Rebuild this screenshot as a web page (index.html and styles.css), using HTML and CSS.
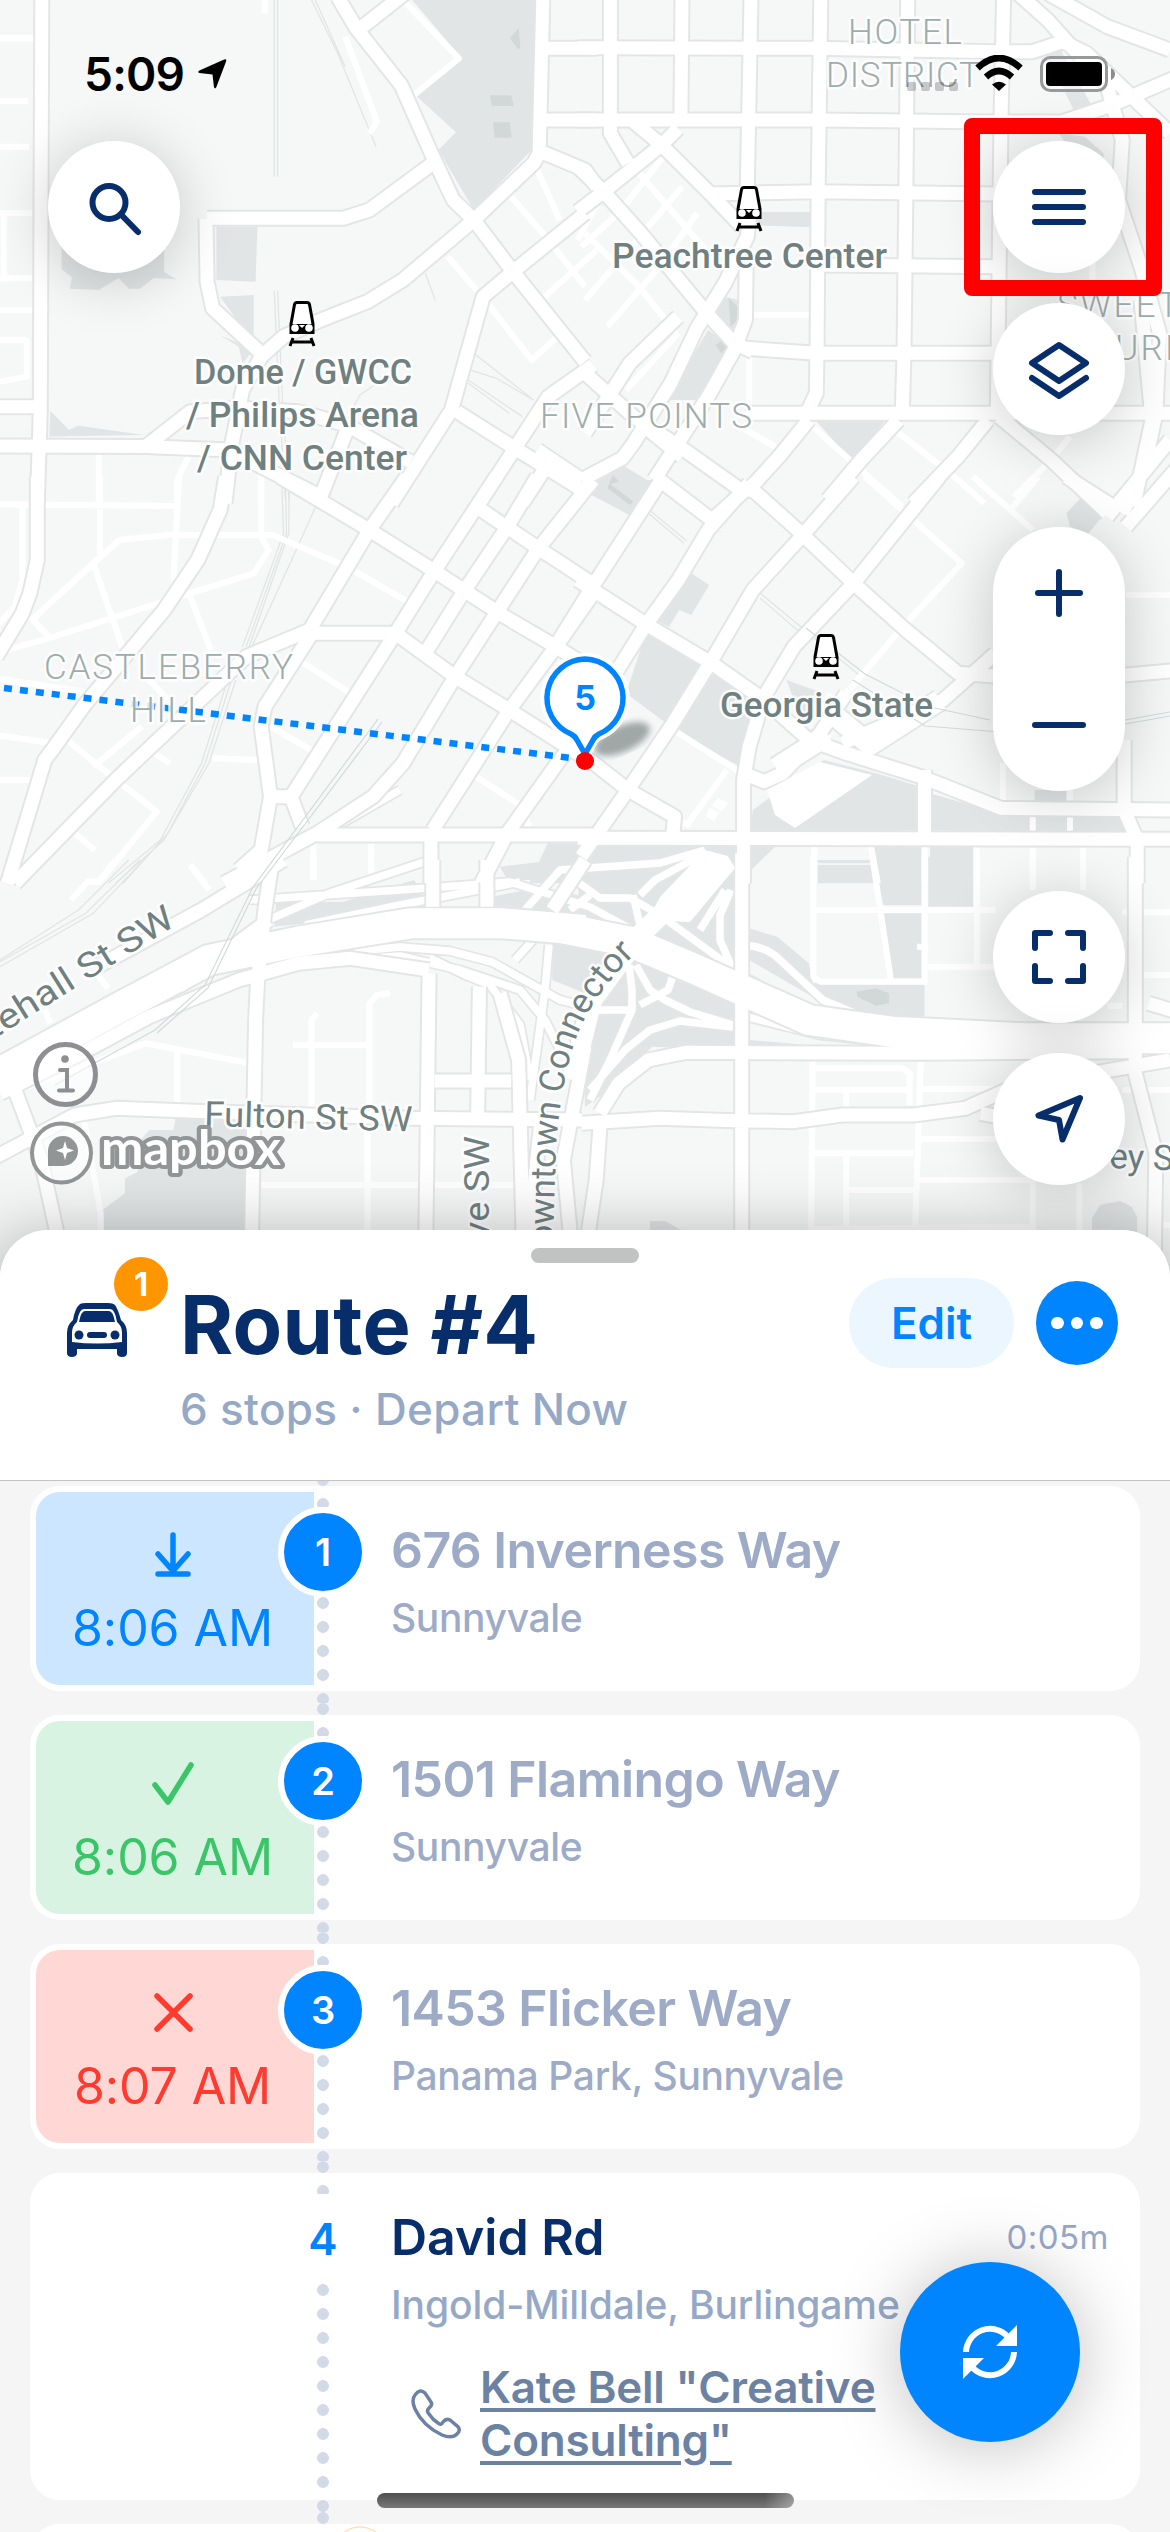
FILE: index.html
```html
<!DOCTYPE html>
<html lang="en">
<head>
<meta charset="utf-8">
<title>Route #4</title>
<link rel="stylesheet" href="styles.css">
</head>
<body>
<main class="screen">
  <section class="map">
    <svg class="map-canvas" viewBox="0 0 1170 1330" width="1170" height="1330">
      <defs>
        <filter id="soft"><feGaussianBlur stdDeviation="3"/></filter>
        <linearGradient id="fade" x1="0" y1="0" x2="0" y2="1"><stop offset="0" stop-color="#000" stop-opacity="0"/><stop offset="1" stop-color="#000" stop-opacity=".1"/></linearGradient>
        <g id="station">
          <path d="M8 1.500h10q2 0 2.500 2L24 23v8.500H2V23L5.500 3.500q.5-2 2.500-2z" fill="#fff" stroke="#000" stroke-width="3"/>
          <path d="M2 23h22v10H2z"/><circle cx="6" cy="27" r="3.800" fill="#fff"/><circle cx="20" cy="27" r="3.800" fill="#fff"/><path d="M10 24h6l-3 3z" fill="#fff"/>
          <path d="M4 37l-3 8M22 37l3 8M3 41h20" fill="none" stroke="#000" stroke-width="3"/>
        </g>
        <g id="freeways">
          <g transform="translate(0 860) scale(.3731 .3333)">
            <path d="M-20 650L300 455L560 300L800 245L1100 190L1350 190L1568 210"/>
          </g>
          <g transform="translate(585 860) scale(.3731 .3333)">
            <path d="M-60 205L120 245L300 330L420 390L600 480L820 515L1180 535L1600 535"/>
          </g>
        </g>
        <g id="connectors">
          <path d="M715 862L640 935L592 1000L572 1080M828 735L776 768M822 705L870 745L940 700"/>
        </g>
        <g id="streets">
          <g transform="scale(.3731 .3333)">
            <path d="M112-10L108 1230L100 1510M905-10L955 85L1075 255L1160 470L1215 600L1270 660L1375 815L1568 1085M1085-20L955 95"/>
            <path d="M1455-10L1445 460L1430 490L1270 660L1080 840L985 905L860 960L760 1010L700 1070L650 1170L620 1340L603 1510"/>
            <path d="M1455 145H1600M1450 360H1600M1450 455L1568 510L1600 560M555 655H920L990 630L1160 490M552 655L555 845L570 925L700 1060"/>
            <path d="M1568 640L1375 815L1295 890L1210 1230L1050 1510M1590 1095L1470 1190L1380 1345L1285 1510M1225 1235L1380 1345L1568 1475"/>
            <path d="M-10 1220H100M-10 1338L390 1340L510 1235L640 1225L800 1235L930 1275L1100 1385M390 1340L620 1350L700 1400L860 1490M930 1290L860 1490M1470 1390L1400 1510"/>
          </g>
          <g transform="translate(585 0) scale(.3731 .3333)">
            <path d="M68-10V400L115 490M260-10L257 360M445-10L435 560L440 670M632-10L625 560L622 1040L620 1180L590 1250M865-10L860 580L855 1060L850 1250M1122-10L1115 360L1105 1240"/>
            <path d="M-20 143L620 145L1100 155L1200 155L1280 125L1345 160L1568 400M-20 360H630L1100 366L1280 365L1400 320L1600 225M335 582L620 575L1110 582M625 795L1110 800M430 1045L620 1060H1105M430 1240H1600"/>
            <path d="M250 385L205 435L50 575L-20 635M-20 500L50 575L150 700L260 850L330 945L400 1030L450 1055M130 365L205 435L335 580L420 680"/>
            <path d="M440 660L435 710L375 850L300 985L230 1150L130 1330L100 1375L-10 1440M432 800L430 960L400 1050L330 1190L185 1440M-10 1110L130 1250L260 1345L430 1480M600 1260L520 1370L430 1480"/>
            <path d="M840 1260L740 1380L650 1500M1080 1260L1000 1370L880 1510M1110 1250L1250 1380L1400 1540M160 1280L260 1370M0 1300L120 1090L250 950M1160-20L1240 60L1400 260L1440 420L1430 600L1490 800L1540 1000L1530 1240L1500 1400L1440 1540M1240-20L1400 80L1568 150M1490 900L1520 1260L1470 1520"/>
          </g>
          <g transform="translate(0 480) scale(.3731 .3333)">
            <path d="M100-10V240L80 340L60 400L-10 530M605-10L590 90L530 240L440 390L230 670L140 810L120 840L20 1210M750-10L990 150L1160 270L1345 405L1490 500L1590 570"/>
            <path d="M1090-10L990 150L830 450L660 530L480 720L310 900L40 1210M1330-10L1160 280L1060 460L780 950L810 1040M1440-10L1360 140L1240 340L1145 510M1590 0L1440 210L1330 400L1220 590L1080 850L1000 950L850 1060L600 1210M1590 340L1490 500L1365 690L1160 1050"/>
            <path d="M1590 720L1500 840L1360 1060L1290 1210M1290 90L1450 210L1600 320M1560 0L1440 -90M830 460H1060L1220 590L1365 690L1520 800L1590 850M830 470L710 680L700 740L725 950L700 1110L640 1170M850 1065H1590M1155 1075V1210M725 950H780"/>
          </g>
          <g transform="translate(585 480) scale(.3731 .3333)">
            <path d="M210-10L20 320L-80 500M440 10L330 150L250 300L160 440L20 690L-60 800M720-10L580 170L450 330L340 540L230 740L115 930L-10 1130M950-10L720 310L560 500L480 650L440 800L425 900V1210"/>
            <path d="M430 10L570 150L720 310L860 450L1000 580L1120 590M200 0L340 120L430 30M-20 300L160 430L340 550L480 660L600 780L700 820L900 890L1115 985L1590 990M-10 820L115 930L240 1010L235 1070M-20 1075L1590 1078"/>
            <path d="M425 880L480 905L530 880L630 760L700 640M910 870V1070M1445 780V990L1480 1080V1210M1400 590L1600 570M1290-10L1430 90M690 790L960 660L1100 520M1400 110L1568-120M1450 140L1590-40"/>
          </g>
          <g transform="translate(0 860) scale(.3731 .3333)">
            <path d="M-10 600L40 690L110 900L180 1260M-10 890L200 765L310 745L560 755L1100 775L1560 780M730 0L710 150L690 370L685 480L672 1260M0 700L200 590L400 470L640 360L800 310L940 295L1150 330"/>
            <path d="M480 380L720 180M1150 340L1140 1260M1285 380L1280 780M1165 663H1370M1340 400L1390 600L1405 1260M1450 780L1430 1000V1260M1568 560L1510 900L1540 1260M760 0L540 150L260 320"/>
            <path d="M1160 0V140M1305 0V140M1568 0L1480 150"/>
          </g>
          <g transform="translate(585 860) scale(.3731 .3333)">
            <path d="M420-20V1260M-10 790L200 775L400 782L560 785L690 765L880 765L1020 745L1150 680L1568 600M1475-10V640L1530 880L1525 1260"/>
            <path d="M40 760L90 670L170 600L270 577L900 580L1460 575M40 800L30 960L-10 1260M1510 430L1600 460M1060 760L1200 790"/>
          </g>
        </g>
        <g id="ramps">
          <path d="M268 920L330 893L430 860M250 900L400 890L510 882L590 907L660 945L735 990M305 925L400 905L520 882M280 958L400 947L450 951L492 962L560 1000L600 1010H632M285 965L400 956L460 970L520 990L545 1020L560 1050M430 958L465 975L490 985L520 1025L530 1080M735 970L660 915L630 898H600L575 880M525 910L560 870L660 863L705 850M640 895L655 880L705 853M731 890L720 915V940L733 970M725 890L700 930M629 965L632 990V1010L610 1060L590 1100M636 965L650 990L665 1000L690 1012L733 1025M590 1090L625 1050L650 1030L680 1021L733 1027M740 945Q765 945 780 960L823 1000L870 1020M740 1015L820 1035L920 1045M549 945L545 990L530 1100M533 940L515 960M570 910L590 895M633 895L640 925M640 1005L668 990L675 970M400 790L330 830"/>
        </g>
        <g id="lanes">
          <g transform="scale(.3731 .3333)">
            <path d="M710-10V40M-10 115H90M-10 303H75M-10 440H78M-10 640H90M0 835H90M0 930H90M10 640V835M0 1020H72V1130L0 1145M1080 0L1230 175L1110 285M925 110L1010 365L990 400M1200 770L1300 900L1425 1080L1490 1015M1370 590L1470 720L1568 860M1440 510L1500 660M1600 750L1460 890M265 1360V1510M505 1370L475 1440V1510M700 1420V1510"/>
          </g>
          <g transform="translate(585 0) scale(.3731 .3333)">
            <path d="M450 945H610M145 520L300 720L380 820M0 700L145 860L245 1000M50 575L-20 720M210 470L90 640L-10 740M260 560L140 720L0 900M300 640L200 800L60 980M250 1000L110 1170M440 1060V1230M600 1270L720 1390L850 1520M830 1290L990 1430L1070 1510M1300 1310L1250 1380L1150 1490M400 1270L510 1340M1220 700L1480 690M1360 700V840"/>
          </g>
          <g transform="translate(0 480) scale(.3731 .3333)">
            <path d="M-10 73L470 78M268-10V230M480-10L465 300M700-10V170M90 415L250 250L320 180L450 165H730L930 260L1100 370M0 515L130 475L480 350L680 280L720 210L700 170M250 250L330 510M510 350L565 510M60 80V300L40 380L-10 440M80 410L130 470M-10 595L250 640M-10 765L140 790M-10 900H100M180 780L300 890L420 995L270 1200M380 740L250 860M400 810L455 850M200 1060L255 1110M400 600L450 660M800 540L940 640M725 740L850 820M570 835L690 840M1270 885L1400 980L1420 1050M840 1080V1200M995 1080V1200M510 1155L550 1210"/>
          </g>
          <g transform="translate(585 480) scale(.3731 .3333)">
            <path d="M750-10L870 110L1010 250L860 430L700 640M1040-10L1200 150M1215-10L1140 90M230 745L420 880M380 870L270 1040M655 640L650 780M1120 850V970M1300 850V1060M1200 1000V1210M1335 1090V1210M1050 1090V1210M910 1090V1210M615 1090V1210M765 1090L785 1210M1450 345H1590M240 1030H280"/>
          </g>
          <g transform="translate(0 860) scale(.3731 .3333)">
            <path d="M840-10V60M995-10V60M510 15L560 90M50 690L390 550L670 610M475 570V725M835 750V480L850 460M990 750V430L1010 405L1045 400M785 555H990M985 800V1260M690 975H1400M225 780L270 1060V1260M190 120L235 65H265L310 0M120 450L135 490M265 350L290 385"/>
          </g>
          <g transform="translate(585 860) scale(.3731 .3333)">
            <path d="M612-10V350L630 365H910V-10M770-10L820 360M620 150H1100M920 320H1100M1050-10V320M1200-10V90M1335-10V90M1440 157H1590M1490 345H1590M1400 437H1440M610 605L605 1260M615 625H850L870 640V735M615 690H870M700 700V740M900 605L880 1260M900 687H1110M1440 690H1590M610 880H880M700 890V1260M700 990H880M890 837H1110M885 960H1200V1260M1325 970V1260M610 1107L1200 1100M1540 1095H1590M890 260H920"/>
          </g>
        </g>
      </defs>
      <rect class="land" width="1170" height="1330"/>
      <g class="parks">
        <g transform="scale(.3731 .3333)">
          <path d="M1105 0H1437L1425 450L1270 630L1175 450L1222 397L1115 287L1237 175zM580 680H690L685 845L580 840zM590 890L680 885V1030zM590 1005L680 1050L650 1090L640 1040zM165 740H440V815L472 838L412 834L375 866H345L318 834L265 870L187 866L193 832L165 808zM135 1233L185 1290L210 1277L385 1305L132 1310z"/>
          <path class="building" d="M1313 286H1370L1377 318H1318zM1321 367H1367L1371 413H1326zM1367 115L1390 85L1395 146H1388z"/>
        </g>
        <g transform="translate(585 0) scale(.3731 .3333)">
          <path d="M450 636H610V682L450 676zM373 890L412 900L405 995L345 940zM330 990L385 1035L320 1200H220zM615 1257H807L718 1388zM105 1398L180 1450L120 1547L0 1465zM1230 150L1275 150L1360 320L1310 330zM1270 400L1340 410L1390 460V520L1300 450z"/>
          <path class="building" d="M350 1035L370 1020L385 1040L365 1060zM75 1425L135 1500L125 1510L65 1450zM385 895L410 920V960L390 980z"/>
        </g>
        <g transform="translate(585 480) scale(.3731 .3333)">
          <path d="M105 0H190L120 105L0 35zM275 272L333 315L285 405L253 390L225 440L180 415zM165 455L325 560L230 740L110 640zM345 580L480 680L430 770L415 860L240 750zM540 600L640 640L580 770L560 660zM450 990L560 900L640 840L780 880L900 920V1050L440 1060zM925 940L1110 1000H1440L1480 1070L925 1050zM-100 1090H410V1210H-150zM445 1100H510L445 1170zM620 1155H770L775 1210H620zM770 1100H905V1210H790zM925 1100H1040V1210H925zM1290 100L1340 40L1400 90L1350 160L1300 140zM1205 930H1290V970H1205z"/>
          <path class="building" d="M65 10L130 65L120 75L60 25z"/>
        </g>
        <g transform="translate(0 860) scale(.3731 .3333)">
          <path d="M740 125H920L1110 60L1135 105V145L820 190L735 200zM1320 110L1450 80L1568 110V160L1320 150zM1340 20L1568-10V60H1360zM1480 250L1568 260V400L1480 360zM470 775H660L650 1260H275V1050L335 1000V955L370 935V850L400 810H465z"/>
        </g>
        <g transform="translate(585 860) scale(.3731 .3333)">
          <path d="M-20 0H400V570L180 560L80 680L0 740zM440 205L515 230L600 310L610 370H910V470H800L640 430L440 300zM440 540L650 560V572H440zM440 340L600 440L580 525L440 470zM625 10H770L800 135H905L900 160H800L820 355H905V0H620zM920-10H1040V140H920zM175 1083H215L257 1110V1260H165zM1380 1035L1435 1023L1465 1040L1480 1070V1260H1359V1075z"/>
          <path class="building" d="M728 395L780 385L815 400V430L780 437L730 410z"/>
        </g>
      </g>
      <g class="rails">
        <g transform="scale(.3731 .3333)"><path d="M735 0V530M744 0V530M735 872L748 1200L765 1500M744 872L757 1200L775 1500M835 0L905 160L1008 440M845 0L925 200M1140 820L1167 902M1270 1060L1430 1200M1260 1110L1330 1135L1430 1200M1255 1140L1400 1250M1255 1150L1365 1240M1010 1150L965 1185L940 1235"/></g>
        <g transform="translate(0 480) scale(.3731 .3333)"><path d="M755 0L760 160L650 500M765 0L768 160L660 500M775 0L774 160L668 500M850 70L790 220L675 500M610 600L540 850L430 1080L290 1210M620 600L550 850L440 1080L310 1210M632 600L560 850L450 1060L330 1210"/></g>
        <g transform="translate(0 860) scale(.3731 .3333)"><path d="M375 0L230 160L0 305M385 0L250 160L0 320M345 0L210 150L0 300"/></g>
        <g transform="translate(585 480) scale(.3731 .3333)"><path d="M170 100L265 190M175 92L272 182M470 340L740 590M470 355L600 480"/></g>
      </g>
      <use href="#lanes" class="lane"/>
      <use href="#ramps" class="ramp-case"/>
      <use href="#connectors" class="connector-case"/>
      <use href="#ramps" class="ramp"/>
      <use href="#freeways" class="freeway-case"/>
      <use href="#streets" class="street-case"/>
      <use href="#connectors" class="connector"/>
      <use href="#freeways" class="freeway"/>
      <use href="#streets" class="street"/>
      <g class="structure">
        <path d="M767 790L820 762L872 775L795 828L775 815zM660 897L705 850L728 856L735 868L690 922L648 920zM718 798L728 803L722 811L712 806zM710 808L719 813L714 821L706 816z"/>
      </g>
      <g class="metro">
        <path d="M378 719L253 887L205 985L155 1030L55 1085M382 722L256 889L208 988L157 1033M806 628L865 674L930 707L990 720M853 680L925 726L1000 732M1125 720L1170 712M1125 724L1170 716"/>
      </g>

      <path class="route" d="M4 688L579 759"/>
      <g class="labels">
        <g class="station-labels">
          <text x="194" y="384" textLength="218" lengthAdjust="spacingAndGlyphs">Dome / GWCC</text>
          <text x="186" y="427" textLength="233" lengthAdjust="spacingAndGlyphs">/ Philips Arena</text>
          <text x="197" y="470" textLength="210" lengthAdjust="spacingAndGlyphs">/ CNN Center</text>
          <text x="612" y="268" textLength="275" lengthAdjust="spacingAndGlyphs">Peachtree Center</text>
          <text x="720" y="717" textLength="213" lengthAdjust="spacingAndGlyphs">Georgia State</text>
        </g>
        <g class="areas">
          <text x="848" y="44" textLength="114">HOTEL</text>
          <text x="826" y="87" textLength="154">DISTRICT</text>
          <text x="540" y="428" textLength="212">FIVE POINTS</text>
          <text x="44" y="679" textLength="249">CASTLEBERRY</text>
          <text x="130" y="722" textLength="76">HILL</text>
          <text x="1057" y="317" textLength="122">SWEET</text>
          <text x="1042" y="360" textLength="148">AUBURN</text>
        </g>
        <g class="roads">
          <text x="-64" y="1075" transform="rotate(-32 -64 1075)" textLength="284" lengthAdjust="spacingAndGlyphs">Whitehall St SW</text>
          <text x="204" y="1126" transform="rotate(1.500 204 1126)" textLength="208" lengthAdjust="spacingAndGlyphs">Fulton St SW</text>
          <text x="489" y="1240" transform="rotate(-90 489 1240)" textLength="104" lengthAdjust="spacingAndGlyphs">ve SW</text>
          <text x="1109" y="1168" transform="rotate(2 1109 1168)">ey St SE</text>
          <path id="connector" d="M552 1268L556 1145Q562 1075 577 1036Q595 990 642 948" fill="none" stroke="none"/>
          <text><textPath href="#connector" textLength="336" lengthAdjust="spacingAndGlyphs">Downtown Connector</textPath></text>
        </g>
      </g>
      <use href="#station" x="289" y="301"/>
      <use href="#station" x="736" y="186"/>
      <use href="#station" x="813" y="634"/>

      <g class="pin">
        <ellipse cx="622" cy="739" rx="30" ry="13" transform="rotate(-24 622 739)" fill="#5b6565" opacity=".55" filter="url(#soft)"/>
        <path d="M585 657a41 41 0 0 0-15 79q4 1 6 5l9 17l9-17q2-4 6-5a41 41 0 0 0-15-79z" fill="#fff" stroke="#fff" stroke-width="8"/>
        <path d="M585 659a39 39 0 0 0-14 75q4 2 6 6l8 14l8-14q2-4 6-6a39 39 0 0 0-14-75z" fill="#fff" stroke="#0085ff" stroke-width="5.500"/>
        <text x="585" y="710" text-anchor="middle">5</text>
        <circle cx="585" cy="761" r="9" fill="#f00"/>
      </g>

      <g fill="none" stroke="#8e8e93" stroke-width="5">
        <circle cx="65.500" cy="1074.500" r="30" fill="#fff" fill-opacity=".5"/>
        <path d="M60 1070h7v20M59 1090.500h14" stroke-width="4" stroke-linecap="round"/>
        <circle cx="65" cy="1059" r="3.800" fill="#8e8e93" stroke="none"/>
      </g>
      <g class="mapbox">
        <circle cx="61.500" cy="1153" r="29.500" fill="#fff" fill-opacity=".6" stroke="#929596" stroke-width="4"/>
        <path d="M48 1166v-15a15 15 0 1 1 15 15z" fill="#929596"/>
        <path d="M65 1141l2 7 7 2.500-7 2.500-2 7-2-7-7-2.500 7-2.500z" fill="#fff"/>
        <text x="101" y="1165" textLength="180" lengthAdjust="spacingAndGlyphs">mapbox</text>
      </g>
      <rect y="1160" width="1170" height="170" fill="url(#fade)"/>
    </svg>

    <div class="statusbar">
      <span class="clock">5:09</span>
      <svg class="location" viewBox="0 0 32 32"><path d="M2.500 13L28 1.500q3-1 2 2L20 30q-1.500 3-2.500 0L16 17 2.500 15.500Q0 14.500 2.500 13z"/></svg>
      <svg class="signal" viewBox="0 0 52 10"><g fill="#000" opacity=".2"><rect width="9" height="9" rx="2"/><rect x="14" width="9" height="9" rx="2"/><rect x="28" width="9" height="9" rx="2"/><rect x="42" width="9" height="9" rx="2"/></g></svg>
      <svg class="wifi" viewBox="0 0 48 36"><path d="M2.500 13Q24-7 45.500 13M11 22Q24 10 37 22" fill="none" stroke="#000" stroke-width="6.500"/><path d="M17 29.500Q24 24 31 29.500L24 36z"/></svg>
      <svg class="battery" viewBox="0 0 76 36"><rect x="1.500" y="1.500" width="65" height="33" rx="9" fill="#fff" fill-opacity=".5" stroke="#979a9a" stroke-width="3"/><rect x="6" y="6" width="56" height="24" rx="4"/><path d="M71 12q4 2 4 6t-4 6z" fill="#8b8d8d"/></svg>
    </div>

    <button class="round search" aria-label="Search"><svg viewBox="0 0 132 132"><circle cx="61" cy="61.500" r="16.500"/><path d="M73 73.500L90 91"/></svg></button>
    <div class="controls">
      <button class="round" aria-label="Menu"><svg viewBox="0 0 132 132"><path d="M42 51h48M42 66h48M42 81h48"/></svg></button>
      <button class="round" aria-label="Layers"><svg viewBox="0 0 132 132"><path d="M66 42L93 60L66 78L39 60zM39 75L66 93L93 75"/></svg></button>
      <div class="zoom">
        <button aria-label="Zoom in"><svg viewBox="0 0 132 132"><path d="M45 66h42M66 45v42"/></svg></button>
        <button aria-label="Zoom out"><svg viewBox="0 0 132 132"><path d="M42 66h48"/></svg></button>
      </div>
      <button class="round fit" aria-label="Fit"><svg viewBox="0 0 132 132"><path d="M42 57V42H57M75 42H90V57M90 75V90H75M57 90H42V75"/></svg></button>
      <button class="round" aria-label="Locate"><svg viewBox="0 0 132 132"><path d="M87 45L45.500 62.500L66 67L69.500 86.500z"/></svg></button>
    </div>
    <div class="highlight"></div>
  </section>

  <section class="sheet">
    <header class="sheet-head">
      <div class="handle"></div>
      <div class="head-row">
        <div class="vehicle">
          <svg viewBox="0 0 62 56"><path d="M14 3Q16 2 20 2H42Q47 2 49 4Q52 8 55 19Q61 24 61 32V52Q61 56 56 56Q52 56 51 53V48H11V53Q10 56 6 56Q1 56 1 52V32Q1 24 7 19Q9 7 14 3z"/><path d="M18 8H44Q49 8 51 21Q56 25 56 32V41Q31 44 6 41V32Q6 25 11 21Q13 8 18 8z" fill="#fff"/><path d="M19 10H43Q47 10 49 21H13Q15 10 19 10z"/><circle cx="13" cy="34" r="4.500"/><circle cx="49" cy="34" r="4.500"/><rect x="21" y="31" width="20" height="6" rx="3"/></svg>
          <span class="badge">1</span>
        </div>
        <div class="heading"><h1>Route #4</h1><p>6 stops · Depart Now</p></div>
        <button class="edit">Edit</button>
        <button class="more" aria-label="More"><i></i><i></i><i></i></button>
      </div>
    </header>
    <div class="stops">
      <article class="stop">
        <div class="eta eta-load"><svg viewBox="0 0 48 48"><path d="M24 5v36M9 24l15 17l15-17M9 44h30"/></svg><span>8:06 AM</span></div>
        <div class="track"><i></i><b>1</b><i></i></div>
        <div class="place"><h2>676 Inverness Way</h2><p>Sunnyvale</p></div>
      </article>
      <article class="stop">
        <div class="eta eta-done"><svg viewBox="0 0 48 48"><path d="M6 26l13 17L42 6"/></svg><span>8:06 AM</span></div>
        <div class="track"><i></i><b>2</b><i></i></div>
        <div class="place"><h2>1501 Flamingo Way</h2><p>Sunnyvale</p></div>
      </article>
      <article class="stop">
        <div class="eta eta-failed"><svg viewBox="0 0 48 48"><path d="M8 8l33 33M41 8L8 41"/></svg><span>8:07 AM</span></div>
        <div class="track"><i></i><b>3</b><i></i></div>
        <div class="place"><h2>1453 Flicker Way</h2><p>Panama Park, Sunnyvale</p></div>
      </article>
      <article class="stop stop-next">
        <div class="track"><i></i><b>4</b><i></i></div>
        <div class="place">
          <div class="place-top"><h2>David Rd</h2><time>0:05m</time></div>
          <p>Ingold-Milldale, Burlingame</p>
          <div class="contact">
            <svg viewBox="0 0 50 50"><path d="M4 6Q9-1 14 4L20 13Q22 16 18 19Q15 22 18 25Q22 31 27 34Q30 37 32 33Q35 29 39 31L45 36Q51 40 46 45Q41 50 31 46Q12 37 4 20Q0 11 4 6z"/></svg>
            <a>Kate Bell "Creative Consulting"</a>
          </div>
        </div>
      </article>
      <article class="stop stop-peek"><div class="track"><i></i></div><svg class="peek" viewBox="0 0 60 20"><circle cx="30" cy="28" r="26"/></svg></article>
    </div>
  </section>
  <button class="fab" aria-label="Refresh"><svg viewBox="0 0 54 54"><path d="M3 27a24 24 0 0 1 42-15M51 27A24 24 0 0 1 9 42" fill="none" stroke="#fff" stroke-width="6"/><path d="M54 0V21H33zM0 54V33H21z" fill="#fff"/></svg></button>
  <div class="home"></div>
</main>
</body>
</html>
```
FILE: styles.css
```css
* { box-sizing: border-box; margin: 0; padding: 0; }
body { background: #f5f5f5; }
button { border: 0; background: none; font: inherit; }
.screen {
  position: relative; width: 1170px; height: 2532px; overflow: hidden;
  display: flex; flex-direction: column;
  font-family: Inter, "Liberation Sans", sans-serif;
}

/* Map */
.map { position: relative; height: 1230px; flex: none; }
.map-canvas { position: absolute; left: 0; top: 0; }
.map-canvas path { vector-effect: non-scaling-stroke; }
.land { fill: #f6f8f8; }
.parks { fill: #e1e5e6; }
.building { fill: #d2d7d8; }
.structure { fill: #fff; }
#lanes, #ramps, #connectors, #streets, #freeways { fill: none; stroke-linejoin: round; }
.lane { stroke: #fff; stroke-width: 6; }
.ramp { stroke: #fff; stroke-width: 7.5; }
.ramp-case { stroke: #e4e6e6; stroke-width: 11; }
.connector { stroke: #fff; stroke-width: 20; }
.connector-case { stroke: #e4e6e6; stroke-width: 24; }
.street { stroke: #fff; stroke-width: 13; }
.street-case { stroke: #e4e6e6; stroke-width: 17; }
.freeway { stroke: #fff; stroke-width: 30; }
.freeway-case { stroke: #e4e6e6; stroke-width: 34; }
.rails { fill: none; stroke: #e2e5e5; stroke-width: 1.3; }
.metro { fill: none; stroke: #d3dada; stroke-width: 1.2; }
.route { fill: none; stroke: #0085ff; stroke-width: 6.5; stroke-dasharray: 8 8.03; }
.labels text {
  font-family: Roboto, sans-serif; font-size: 35px; fill: #6f8080;
  paint-order: stroke; stroke: #fff; stroke-opacity: .85; stroke-width: 5px; stroke-linejoin: round;
}
.station-labels text { font-weight: 500; }
.labels .areas text { font-weight: 300; fill: #9eadac; font-size: 35px; }
.pin text { font-size: 34px; font-weight: 700; fill: #0085ff; }
.mapbox text {
  font: 700 47px Lato, sans-serif; fill: #fff;
  paint-order: stroke; stroke: #929596; stroke-width: 8px; stroke-linejoin: round;
}

.statusbar { position: absolute; inset: 0 0 auto; height: 116px; }
.statusbar > * { position: absolute; }
.clock { left: 84px; top: 46px; font-size: 46px; line-height: 56px; font-weight: 600; letter-spacing: -.8px; }
.location { left: 197px; top: 58px; width: 31px; height: 31px; }
.signal { left: 907px; top: 82px; width: 52px; height: 10px; }
.wifi { left: 975px; top: 55px; width: 48px; height: 36px; }
.battery { left: 1040px; top: 56px; width: 76px; height: 36px; }

.round, .zoom { background: #fff; box-shadow: 0 6px 60px rgba(0, 0, 0, .2); }
.round { width: 132px; height: 132px; border-radius: 50%; }
.round svg, .zoom svg { display: block; width: 132px; height: 132px; fill: none; stroke: #072e6a; stroke-width: 6; stroke-linecap: round; stroke-linejoin: round; }
.search { position: absolute; left: 48px; top: 141px; }
.controls { position: absolute; right: 45px; top: 141px; display: flex; flex-direction: column; gap: 30px; }
.zoom { display: flex; flex-direction: column; width: 132px; border-radius: 66px; margin-top: 62px; height: 264px; }
.fit { margin-top: 70px; }
.highlight { position: absolute; left: 964px; top: 118px; width: 198px; height: 178px; border: 16px solid #f00; border-radius: 8px; }

/* Route sheet */
.sheet { position: relative; flex: 1; background: #f5f5f5; border-radius: 48px 48px 0 0; box-shadow: 0 0 50px rgba(0, 0, 0, .18); overflow: hidden; }
.sheet-head { height: 251px; background: #fff; border-bottom: 1px solid #c4c4c6; padding-top: 18px; position: relative; z-index: 1; }
.handle { width: 108px; height: 15px; border-radius: 8px; background: #c1c3c2; margin: 0 auto; }
.head-row { display: flex; align-items: flex-start; padding: 0 52px 0 66px; }
.vehicle { position: relative; width: 62px; margin: 38px 52px 0 0; }
.vehicle svg { display: block; width: 62px; height: 56px; fill: #072e6a; }
.badge {
  position: absolute; left: 48px; top: -44px; width: 54px; height: 54px; border-radius: 50%;
  background: #ff9500; color: #fff; font-size: 33px; font-weight: 700; line-height: 54px; text-align: center;
}
.heading { flex: 1; }
.heading h1 { font-size: 81px; line-height: 98px; letter-spacing: .3px; margin-top: 13px; color: #072e6a; white-space: nowrap; }
.heading p { font-size: 44px; line-height: 60px; margin-top: 5px; font-weight: 500; letter-spacing: .3px; color: #95a9c7; white-space: nowrap; }
.edit { width: 165px; height: 90px; margin: 15px 22px 0 0; border-radius: 45px; background: #ebf6ff; color: #0085ff; font-size: 44px; font-weight: 600; }
.more { width: 82px; height: 84px; margin-top: 18px; border-radius: 50%; background: #0085ff; display: flex; align-items: center; justify-content: center; gap: 7px; }
.more i { width: 12.500px; height: 12.500px; border-radius: 50%; background: #fff; }

/* Stops */
.stops { margin-top: -7px; }
.stop { position: relative; height: 229px; display: grid; grid-template-columns: 278px 90px 1fr; }
.stop::before { content: ""; position: absolute; inset: 12px 30px; border-radius: 30px; background: #fff; }
.eta {
  position: relative; grid-area: 1 / 1 / 2 / 3; width: 278px; height: 193px; margin: 18px 0 0 36px; border-radius: 24px 0 0 24px;
  display: flex; flex-direction: column; align-items: center; padding: 38px 5px 0 0; font-size: 50px; line-height: 60px;
}
.eta span { margin-top: 20px; white-space: nowrap; letter-spacing: -.1px; }
.eta svg { width: 48px; height: 48px; fill: none; stroke: currentColor; stroke-width: 5.500; stroke-linecap: round; stroke-linejoin: round; }
.eta-load { background: #cce6ff; color: #0085ff; }
.eta-done { background: #d8f3e2; color: #3ac569; }
.eta-failed { background: #ffd7d5; color: #ff3b30; }
.track { position: relative; grid-area: 1 / 2 / 2 / 3; display: flex; flex-direction: column; align-items: center; }
.track i { width: 12px; height: 33px; background: radial-gradient(circle at 6px 6px, #d3dae7 5.500px, transparent 6.300px) 0 0 / 12px 24px repeat-y; }
.track i:last-child { flex: 1; }
.track b { width: 90px; height: 90px; border: 6px solid #fff; border-radius: 50%; background: #0085ff; color: #fff; font-size: 38px; font-weight: 600; line-height: 78px; text-align: center; }
.place { position: relative; grid-column: 3; padding: 46px 62px 0 23px; color: #9dabc7; }
.place h2 { font-size: 50px; line-height: 60px; font-weight: 600; letter-spacing: -.6px; white-space: nowrap; }
.place p { font-size: 39px; line-height: 48px; margin-top: 14px; white-space: nowrap; font-weight: 500; letter-spacing: -.35px; }
.stop-next { height: 351px; }
.stop-next .track b { background: #fff; color: #0085ff; font-size: 44px; }
.stop-next h2 { color: #072e6a; letter-spacing: 0; }
.stop-next p { color: #95a9c7; letter-spacing: -.1px; }
.place-top { display: flex; justify-content: space-between; align-items: center; }
.place-top time { font-size: 33px; color: #95a9c7; letter-spacing: .5px; margin-right: -1px; }
.contact { display: flex; align-items: center; gap: 19px; padding-left: 20px; margin-top: 32px; }
.contact svg { flex: none; width: 50px; height: 50px; fill: none; stroke: #6c82a3; stroke-width: 3.500; }
.contact a { width: 430px; font-size: 44px; line-height: 53px; font-weight: 600; letter-spacing: -.2px; color: #6c82a3; text-decoration: underline; text-decoration-thickness: 4px; text-underline-offset: 5px; }
.stop-peek .peek { position: absolute; left: 330px; top: 13px; width: 60px; height: 20px; fill: none; stroke: #ffe2ba; stroke-width: 1.5; }

.fab {
  position: absolute; left: 900px; top: 2262px; width: 180px; height: 180px; border-radius: 50%;
  background: #0085ff; box-shadow: 0 4px 70px rgba(0, 0, 0, .25); display: flex; align-items: center; justify-content: center;
}
.fab svg { width: 54px; height: 54px; }
.home { position: absolute; left: 377px; top: 2493px; width: 417px; height: 15px; border-radius: 8px; background: linear-gradient(90deg, transparent 93%, rgba(255, 255, 255, .35)), linear-gradient(#4f4f4f, #777); }
```
